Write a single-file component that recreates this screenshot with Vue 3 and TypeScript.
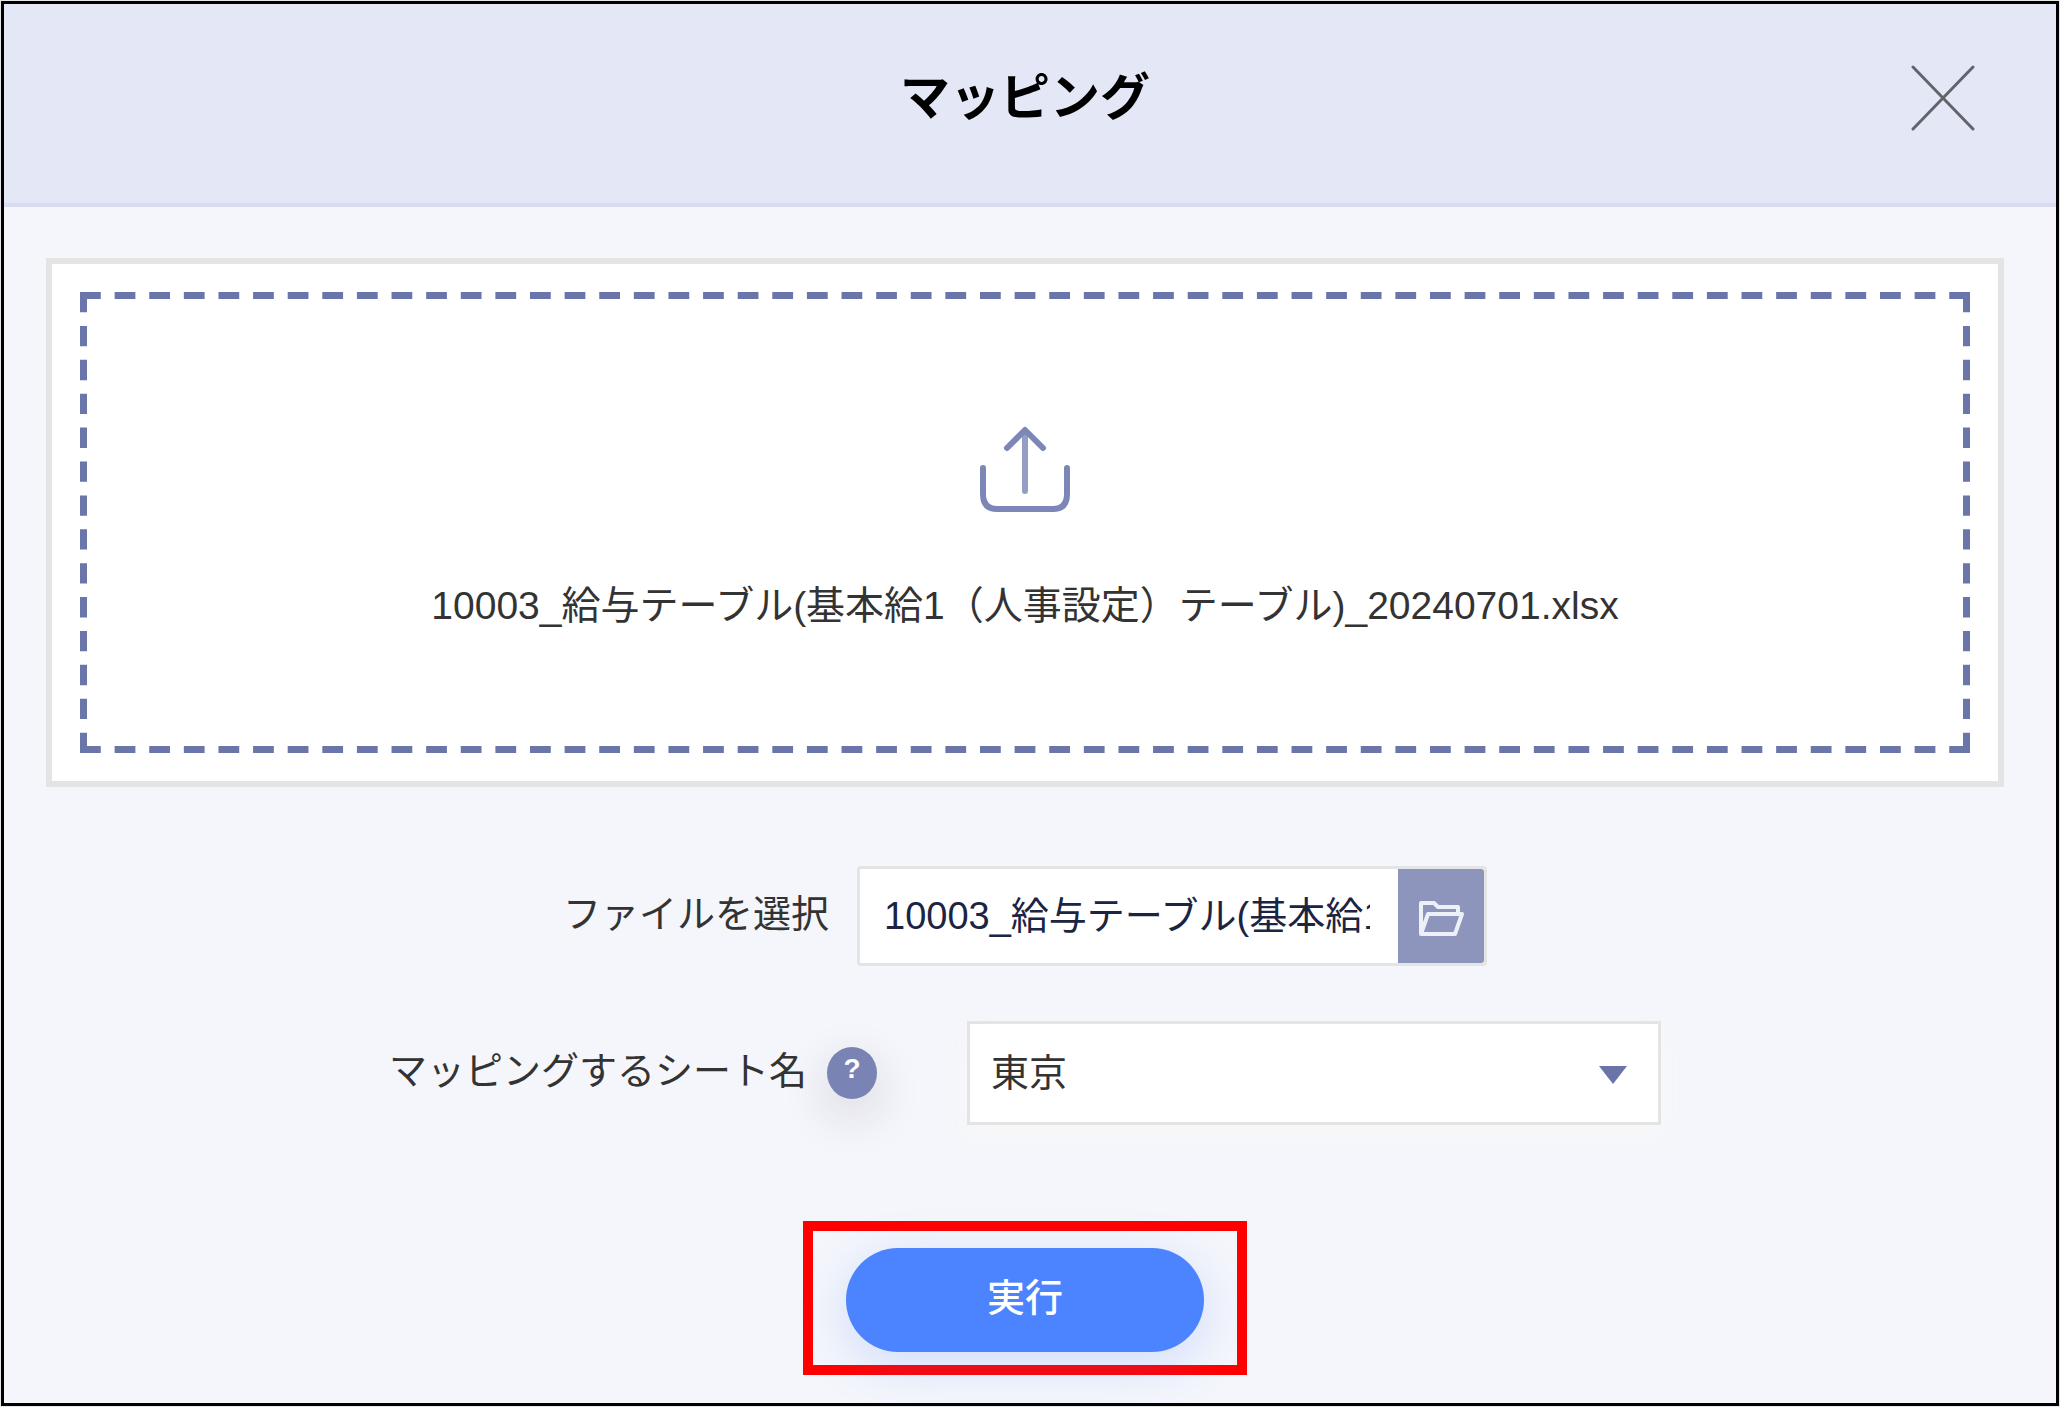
<script setup lang="ts">
import { ref } from 'vue'

const fileName = ref('10003_給与テーブル(基本給1（人事設定）テーブル)_20240701.xlsx')
const sheets = ['東京']
const sheet = ref(sheets[0])
</script>

<template>
  <div class="page">
    <main class="dialog">
      <header class="head">
        <h1 class="title">マッピング</h1>
        <button class="close" type="button" aria-label="閉じる">
          <svg viewBox="0 0 64 68" width="64" height="68" aria-hidden="true">
            <path d="M2 3 62 65M62 3 2 65" />
          </svg>
        </button>
      </header>

      <form class="body" @submit.prevent>
        <section class="panel">
          <div class="drop">
            <svg class="dashes" aria-hidden="true">
              <line class="dash" x1="0" y1="0" x2="100%" y2="0" pathLength="273" />
              <line class="dash" x1="0" y1="100%" x2="100%" y2="100%" pathLength="273" />
              <line class="dash" x1="0" y1="0" x2="0" y2="100%" pathLength="68" />
              <line class="dash" x1="100%" y1="0" x2="100%" y2="100%" pathLength="68" />
            </svg>
            <svg class="upload" viewBox="0 0 90 86" width="90" height="86" aria-hidden="true">
              <path class="shaft" d="M45 6V65" />
              <path d="M27 22 45 4 63 22" />
              <path d="M3 42V68Q3 83 17 83H73Q87 83 87 68V42" />
            </svg>
            <p class="name">{{ fileName }}</p>
          </div>
        </section>

        <div class="row file-row">
          <label class="label" for="file">ファイルを選択</label>
          <div class="picker">
            <input id="file" class="file" type="text" readonly :value="fileName" />
            <button class="browse" type="button" aria-label="参照">
              <svg viewBox="0 0 46 36" width="46" height="36" aria-hidden="true">
                <path d="M3 34V3H16L20 7H40V13M3 34 10 14H44L37 34Z" />
              </svg>
            </button>
          </div>
        </div>

        <div class="row sheet-row">
          <label class="label" for="sheet">マッピングするシート名</label>
          <button class="help" type="button" aria-label="ヘルプ">?</button>
          <div class="select-wrap">
            <select id="sheet" v-model="sheet" class="select">
              <option v-for="s in sheets" :key="s" :value="s">{{ s }}</option>
            </select>
            <svg class="caret" viewBox="0 0 28 18" width="28" height="18" aria-hidden="true">
              <path d="M0 0H28L14 18Z" />
            </svg>
          </div>
        </div>

        <div class="mark">
          <button class="run" type="submit">実行</button>
        </div>
      </form>
    </main>
  </div>
</template>

<style>
body {
  margin: 0;
  background: #e6e6e6;
}
</style>

<style scoped>
.page {
  padding: 1px;
  font-family: "Liberation Sans", "Noto Sans CJK JP", sans-serif;
  font-size: 38px;
  color: #333;
}
.page * {
  box-sizing: border-box;
}
button,
input,
select {
  margin: 0;
  padding: 0;
  border: 0;
  font: inherit;
}
.dialog {
  border: 3px solid #000;
  background: #f4f6fb;
}
.head {
  display: grid;
  grid-template-columns: 1fr auto 1fr;
  height: 203px;
  padding: 0 52px 0 42px;
  border-bottom: 4px solid #d8dcf1;
  background: #e4e8f6;
}
.title {
  grid-column: 2;
  margin: 56px 0 0;
  font-size: 50px;
  line-height: 76px;
  font-weight: 700;
  color: #000;
}
.close {
  justify-self: end;
  width: 64px;
  height: 68px;
  margin: 60px 29px 0 0;
  background: none;
}
.close svg {
  display: block;
  fill: none;
  stroke: #62646b;
  stroke-width: 3;
  stroke-linecap: round;
}
.body {
  display: flex;
  flex-direction: column;
  align-items: center;
  padding: 51px 52px 28px 42px;
}
.panel {
  width: 100%;
  padding: 28px;
  border: 6px solid #e4e4e4;
  background: #fff;
}
.drop {
  position: relative;
  display: flex;
  flex-direction: column;
  align-items: center;
  height: 461px;
  padding-top: 134px;
}
.dashes {
  position: absolute;
  inset: 0;
  width: 100%;
  height: 100%;
}
.dash {
  stroke: #6a76aa;
  stroke-width: 14;
  stroke-dasharray: 3 2;
}
.upload {
  fill: none;
  stroke: #7c87b7;
  stroke-width: 6;
  stroke-linecap: round;
  stroke-linejoin: round;
}
.shaft {
  stroke: #949dc4;
}
.name {
  margin: 64px 0 0;
  line-height: 60px;
  font-size: 39px;
  white-space: nowrap;
}
.row {
  display: flex;
  align-items: center;
}
.label {
  padding-bottom: 4px;
  line-height: 60px;
  white-space: nowrap;
}
.file-row {
  margin-top: 79px;
}
.picker {
  display: flex;
  width: 630px;
  height: 100px;
  margin-left: 28px;
  border: 3px solid #e4e4e4;
  border-radius: 4px;
  background: #fff;
}
.file {
  flex: 1;
  min-width: 0;
  margin: 0 28px 0 24px;
  padding-bottom: 8px;
  background: none;
  color: #1b2442;
  outline: 0;
}
.browse {
  display: flex;
  align-items: center;
  justify-content: center;
  width: 86px;
  padding-top: 4px;
  border-radius: 0 3px 3px 0;
  background: #8d95bd;
}
.browse svg {
  fill: none;
  stroke: #eef0f8;
  stroke-width: 4;
  stroke-linejoin: round;
}
.sheet-row {
  margin-top: 55px;
}
.help {
  width: 50px;
  height: 52px;
  margin-left: 20px;
  padding-bottom: 8px;
  border-radius: 50%;
  background: #7a84b4;
  box-shadow: 0 16px 48px rgba(60, 30, 50, 0.16);
  color: #fff;
  font-size: 28px;
  line-height: 44px;
  font-weight: 700;
}
.select-wrap {
  position: relative;
  width: 694px;
  margin-left: 90px;
}
.select {
  display: block;
  width: 100%;
  height: 104px;
  padding: 0 72px 0 21px;
  border: 3px solid #e4e4e4;
  border-radius: 0;
  appearance: none;
  background: #fff;
  box-shadow: 0 12px 24px #f8f8f8;
  color: #333;
}
.caret {
  position: absolute;
  top: 45px;
  right: 34px;
  fill: #6974a8;
  pointer-events: none;
}
.mark {
  margin-top: 96px;
  padding: 17px 33px 13px;
  border: 10px solid #f00;
}
.run {
  display: block;
  width: 358px;
  height: 104px;
  padding-bottom: 12px;
  border-radius: 52px;
  background: #4c84ff;
  box-shadow: 0 12px 50px rgba(76, 132, 255, 0.22);
  color: #fff;
  font-weight: 500;
}
</style>
